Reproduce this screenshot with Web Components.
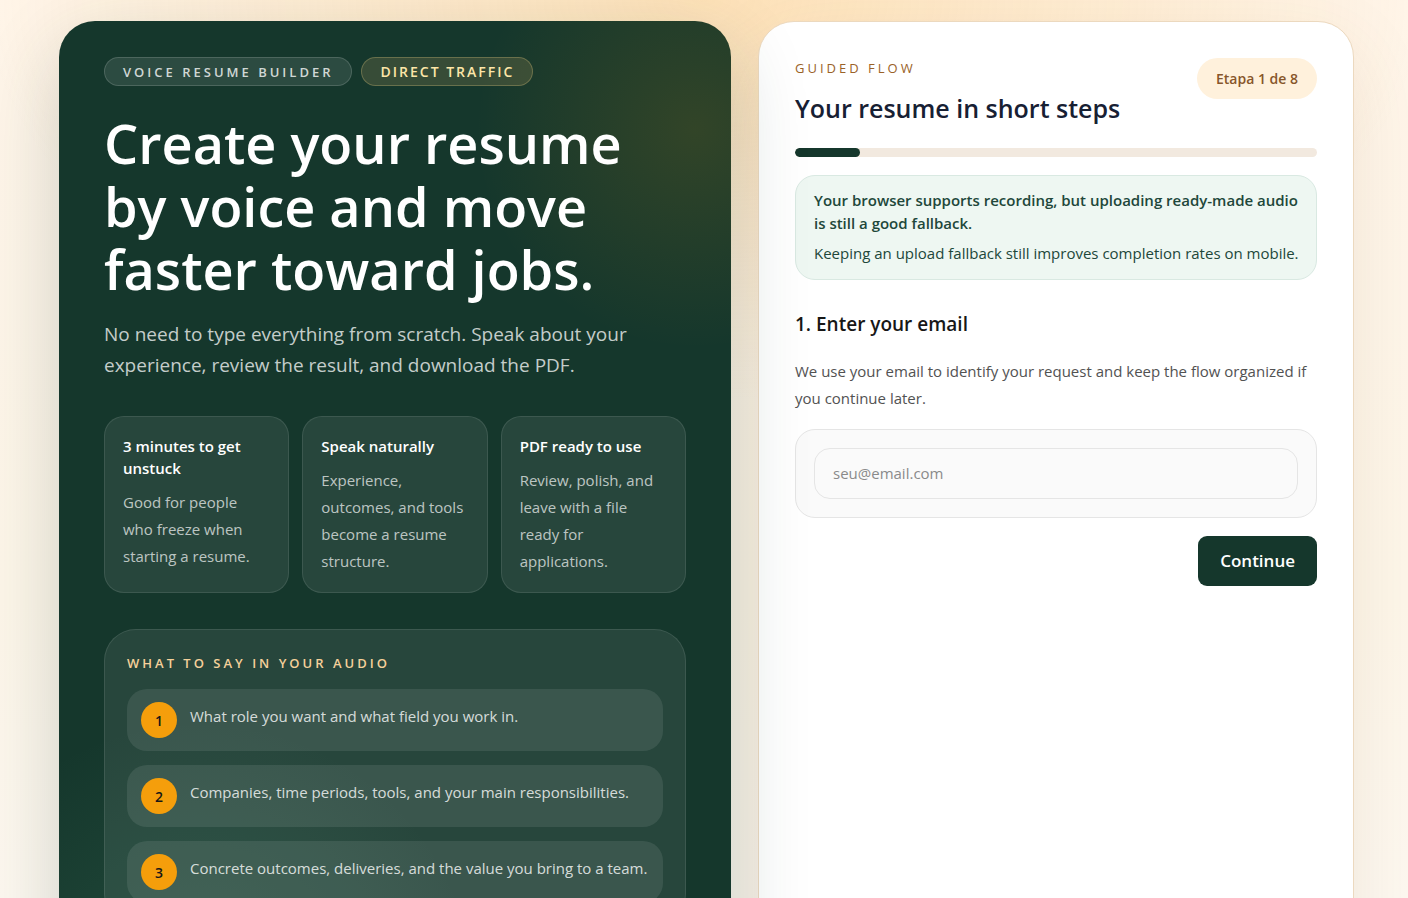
<!DOCTYPE html>
<html lang="en">
<head>
<meta charset="utf-8">
<meta name="viewport" content="width=device-width, initial-scale=1">
<title>Voice Resume Builder</title>
<style>
  html { height: 100%; overflow: hidden; }
  body {
    margin: 0; min-height: 100%;
    font-family: "Open Sans", "Noto Sans", sans-serif;
    font-size: 15px; line-height: 27px; color: #171717;
    background:
      radial-gradient(ellipse 720px 400px at 50% 0, rgba(251, 191, 96, .36), rgba(251, 191, 96, 0)),
      linear-gradient(180deg, #fff5e9 0, #fdf6e9 600px, #fdf8f0 900px);
  }
</style>
</head>
<body>
<resume-page>
  <hero-panel slot="hero">
    <pill-tag slot="tags">Voice resume builder</pill-tag>
    <pill-tag slot="tags" tone="amber">Direct traffic</pill-tag>
    <span slot="title">Create your resume by voice and move faster toward jobs.</span>
    <span slot="lead">No need to type everything from scratch. Speak about your experience, review the result, and download the PDF.</span>
    <feature-card slot="features"><span slot="title">3 minutes to get unstuck</span>Good for people who freeze when starting a resume.</feature-card>
    <feature-card slot="features"><span slot="title">Speak naturally</span>Experience, outcomes, and tools become a resume structure.</feature-card>
    <feature-card slot="features"><span slot="title">PDF ready to use</span>Review, polish, and leave with a file ready for applications.</feature-card>
    <tip-list slot="tips">
      <span slot="title">What to say in your audio</span>
      <tip-item number="1">What role you want and what field you work in.</tip-item>
      <tip-item number="2">Companies, time periods, tools, and your main responsibilities.</tip-item>
      <tip-item number="3">Concrete outcomes, deliveries, and the value you bring to a team.</tip-item>
    </tip-list>
  </hero-panel>
  <flow-panel slot="flow">
    <span slot="eyebrow">Guided flow</span>
    <span slot="title">Your resume in short steps</span>
    <span slot="step">Etapa 1 de 8</span>
    <step-progress slot="progress" value="1" max="8"></step-progress>
    <info-note slot="note">
      <span slot="title">Your browser supports recording, but uploading ready-made audio is still a good fallback.</span>
      Keeping an upload fallback still improves completion rates on mobile.
    </info-note>
    <email-step></email-step>
  </flow-panel>
</resume-page>
<script>
  const define = (name, html, setup) => {
    const template = document.createElement('template');
    template.innerHTML = html;
    customElements.define(name, class extends HTMLElement {
      constructor() {
        super();
        this.attachShadow({ mode: 'open' }).append(template.content.cloneNode(true));
      }
      connectedCallback() { if (setup) setup(this, this.shadowRoot); }
    });
  };

  define('resume-page', `
    <style>
      :host { display: block; padding: 21px 54px 21px 59px; }
      main { display: grid; grid-template-columns: minmax(0, 672fr) minmax(0, 596fr); gap: 27px; max-width: 1296px; margin: 0 auto; }
      @media (max-width: 960px) { main { grid-template-columns: minmax(0, 1fr); } }
    </style>
    <main><slot name="hero"></slot><slot name="flow"></slot></main>`);

  define('hero-panel', `
    <style>
      :host {
        display: block; position: relative; box-sizing: border-box; padding: 36px 45px 45px;
        border-radius: 36px; color: #fff;
        background:
          radial-gradient(circle 220px at calc(100% - 36px) 108px, rgba(245, 158, 11, .13), rgba(245, 158, 11, 0)),
          radial-gradient(circle 280px at 140px 980px, rgba(110, 190, 150, .15), rgba(110, 190, 150, 0)),
          #15372c;
        box-shadow: 0 27px 80px rgba(22, 56, 45, .2);
      }
      .tags { display: flex; flex-wrap: wrap; gap: 9px; }
      h1 { margin: 26px 0 0; font-size: 54px; line-height: 63px; font-weight: 600; }
      .lead { margin: 18px 0 0; font-size: 19px; line-height: 31px; color: rgba(255, 255, 255, .76); }
      .features { display: grid; grid-template-columns: repeat(3, minmax(0, 1fr)); gap: 13px; margin: 35px 0 36px; }
    </style>
    <section>
      <div class="tags"><slot name="tags"></slot></div>
      <h1><slot name="title"></slot></h1>
      <p class="lead"><slot name="lead"></slot></p>
      <div class="features"><slot name="features"></slot></div>
      <slot name="tips"></slot>
    </section>`);

  define('pill-tag', `
    <style>
      :host {
        display: block; padding: 1px 18px 0; border: 1px solid rgba(255, 255, 255, .15); border-radius: 15px;
        background: rgba(255, 255, 255, .1); color: rgba(255, 255, 255, .78);
        font-size: 13px; line-height: 26px; font-weight: 600; letter-spacing: 3px; text-transform: uppercase;
      }
      :host([tone="amber"]) { background: rgba(253, 200, 120, .15); border-color: rgba(253, 220, 140, .25); color: #fde6a8; font-size: 14px; letter-spacing: 2px; }
    </style>
    <slot></slot>`);

  define('feature-card', `
    <style>
      :host {
        display: block; padding: 18px 21px 17px 18px; border: 1px solid rgba(255, 255, 255, .1); border-radius: 20px;
        background: rgba(255, 255, 255, .08); color: rgba(255, 255, 255, .7);
      }
      h2 { margin: 0 0 10px; font-size: 15px; line-height: 22px; font-weight: 600; color: #fff; }
      p { margin: 0; font-size: 15px; line-height: 27px; }
    </style>
    <h2><slot name="title"></slot></h2>
    <p><slot></slot></p>`);

  define('tip-list', `
    <style>
      :host {
        display: block; padding: 22px; border: 1px solid rgba(255, 255, 255, .1); border-radius: 32px;
        background: rgba(255, 255, 255, .08);
      }
      h2 { margin: 0 0 15px; font-size: 13px; line-height: 22px; font-weight: 600; letter-spacing: 3px; text-transform: uppercase; color: #f5d09a; }
      .items { display: grid; gap: 14px; }
    </style>
    <h2><slot name="title"></slot></h2>
    <div class="items" role="list"><slot></slot></div>`);

  define('tip-item', `
    <style>
      :host { display: flex; gap: 13px; padding: 13px 14px; border-radius: 20px; background: rgba(255, 255, 255, .09); color: rgba(255, 255, 255, .8); }
      .number {
        flex: none; display: grid; place-items: center; width: 36px; height: 36px; border-radius: 50%;
        background: #f59e0b; color: #171717; font-size: 14px; font-weight: 600;
      }
      p { margin: 0; font-size: 15px; line-height: 29px; }
    </style>
    <span class="number"></span>
    <p><slot></slot></p>`,
    (host, root) => {
      host.setAttribute('role', 'listitem');
      root.querySelector('.number').textContent = host.getAttribute('number');
    });

  define('flow-panel', `
    <style>
      :host {
        display: block; box-sizing: border-box; padding: 36px; border: 1px solid #ecd9bf; border-radius: 36px;
        background: #fff; box-shadow: 0 27px 80px rgba(120, 80, 40, .1);
      }
      header { display: flex; align-items: flex-start; justify-content: space-between; gap: 18px; }
      .eyebrow { margin: 0; font-size: 13px; line-height: 20px; letter-spacing: 3px; text-transform: uppercase; color: #9a6228; }
      h2 { margin: 12px 0 0; font-size: 25px; line-height: 36px; font-weight: 600; color: #172033; }
      .step { flex: none; padding: 7px 19px; border-radius: 21px; background: #fff1dc; color: #87562a; font-size: 14px; line-height: 27px; font-weight: 600; }
      .progress { margin: 22px 0 18px; }
    </style>
    <section>
      <header>
        <div>
          <p class="eyebrow"><slot name="eyebrow"></slot></p>
          <h2><slot name="title"></slot></h2>
        </div>
        <span class="step"><slot name="step"></slot></span>
      </header>
      <div class="progress"><slot name="progress"></slot></div>
      <slot name="note"></slot>
      <slot></slot>
    </section>`);

  define('step-progress', `
    <style>
      :host { display: block; height: 9px; border-radius: 5px; background: #f2e9df; overflow: hidden; }
      .bar { height: 100%; border-radius: 5px; background: #15372c; }
    </style>
    <div class="bar"></div>`,
    (host, root) => {
      const value = Number(host.getAttribute('value'));
      const max = Number(host.getAttribute('max'));
      host.setAttribute('role', 'progressbar');
      host.setAttribute('aria-label', 'Progress');
      host.setAttribute('aria-valuenow', value);
      host.setAttribute('aria-valuemax', max);
      root.querySelector('.bar').style.width = (100 * value / max) + '%';
    });

  define('info-note', `
    <style>
      :host { display: block; padding: 13px 12px 12px 18px; border: 1px solid #d9e9e2; border-radius: 20px; background: #eef7f2; color: #21473a; }
      strong { display: block; font-size: 15px; line-height: 23px; font-weight: 600; }
      p { margin: 5px 0 0; font-size: 15px; line-height: 27px; }
    </style>
    <strong><slot name="title"></slot></strong>
    <p><slot></slot></p>`);

  define('email-step', `
    <style>
      :host { display: block; margin-top: 31px; }
      h3 { margin: 0; font-size: 19px; line-height: 27px; font-weight: 600; color: #171717; }
      p { margin: 20px 0 17px; font-size: 15px; line-height: 27px; color: #525252; }
      .field { padding: 18px; border: 1px solid #e5e5e5; border-radius: 20px; background: #fafafa; }
      input {
        display: block; box-sizing: border-box; width: 100%; padding: 11px 18px; border: 1px solid #e5e5e5; border-radius: 16px;
        background: #fafafa; color: #171717; font: inherit; font-size: 15px; line-height: 27px;
      }
      input::placeholder { color: #8a8a8a; opacity: 1; }
      .actions { display: flex; justify-content: flex-end; margin-top: 18px; }
      button { padding: 11px 22px; border: 0; border-radius: 9px; background: #15372c; color: #fff; font: inherit; font-size: 17px; line-height: 28px; font-weight: 600; cursor: pointer; }
    </style>
    <form>
      <h3><label for="email">1. Enter your email</label></h3>
      <p>We use your email to identify your request and keep the flow organized if you continue later.</p>
      <div class="field"><input id="email" type="email" placeholder="seu@email.com"></div>
      <div class="actions"><button type="button">Continue</button></div>
    </form>`);
</script>
</body>
</html>
